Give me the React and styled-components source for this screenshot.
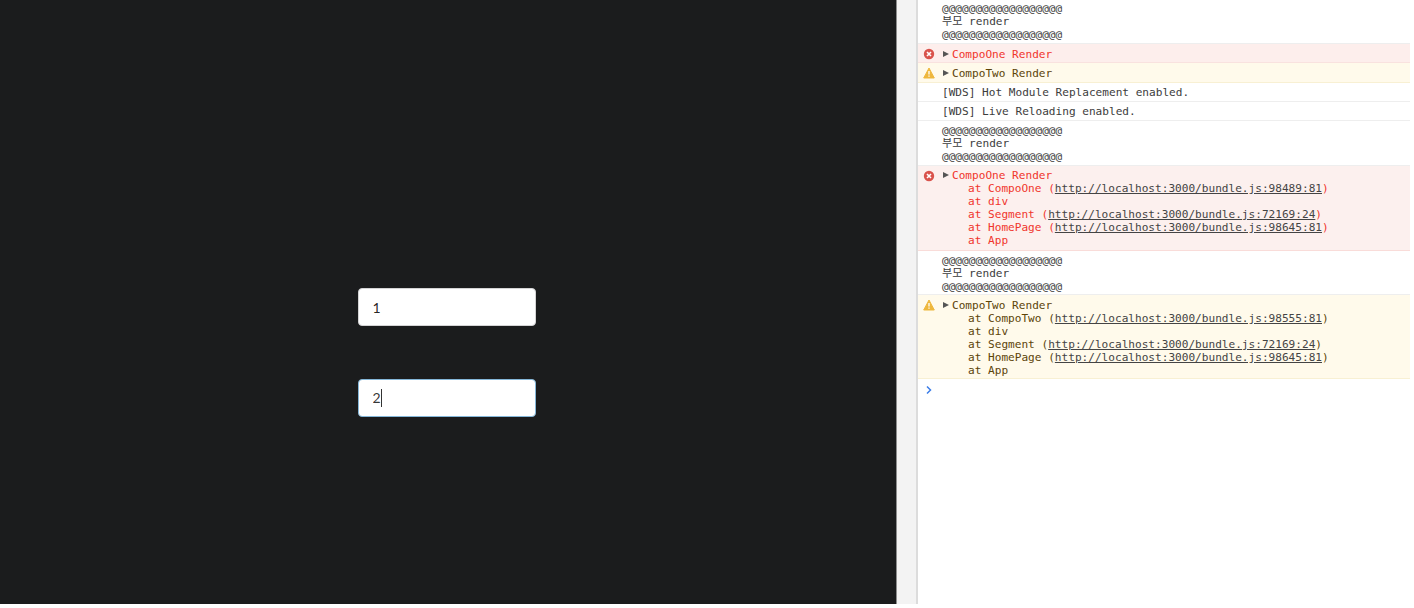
import styled, { createGlobalStyle } from 'styled-components';

const GlobalStyle = createGlobalStyle`
  html,
  body {
    margin: 0;
    height: 100%;
    overflow: hidden;
    background: #fff;
  }
`;

const tones = {
  error: { bg: '#fcf0ee', border: '#f9dcd9', text: '#f0352c' },
  errorFlat: { bg: '#fdeeec', border: '#f9e2df', text: '#f0352c' },
  warn: { bg: '#fffaeb', border: '#f8f0d3', text: '#5c4409' },
  log: { bg: '#fff', border: '#eeeeee', text: '#3c3c3c' },
};

const Page = styled.div`
  display: flex;
  width: 1410px;
  height: 604px;
`;

const Stage = styled.main`
  width: 896px;
  flex: none;
  background: #1b1c1d;
  padding: 288px 0 0 357.5px;
  box-sizing: border-box;
  display: flex;
  flex-direction: column;
  gap: 52.5px;
`;

const FieldWrap = styled.div`
  position: relative;
  width: 178px;
  height: 38px;
`;

const Field = styled.input`
  display: block;
  width: 100%;
  height: 100%;
  box-sizing: border-box;
  border: 1px solid ${(p) => (p.$focused ? '#85b7d9' : '#d4d4d5')};
  border-radius: 4px;
  background: #fff;
  padding: 0 14px;
  font: 14px Lato, 'Liberation Sans', sans-serif;
  color: ${(p) => (p.$focused ? 'rgba(0, 0, 0, 0.8)' : 'rgba(0, 0, 0, 0.87)')};
  outline: none;
`;

const Caret = styled.span`
  position: absolute;
  left: 23.5px;
  top: 10px;
  width: 1px;
  height: 18px;
  background: #333;
`;

const Gutter = styled.div`
  width: 22px;
  flex: none;
  background: #f3f3f3;
  border-left: 1px solid #8e8e8e;
  border-right: 2px solid #dcdcdc;
  box-sizing: border-box;
`;

const Console = styled.section`
  flex: 1;
  min-width: 0;
  font: 11.1px/13px 'DejaVu Sans Mono', 'Noto Sans CJK KR', monospace;
  background: #fff;
`;

const Row = styled.div`
  position: relative;
  box-sizing: border-box;
  height: ${(p) => p.$height}px;
  padding: ${(p) => p.$top}px 0 0 24px;
  white-space: pre;
  background: ${(p) => tones[p.$tone].bg};
  color: ${(p) => tones[p.$tone].text};
  border-bottom: 1px solid ${(p) => tones[p.$tone].border};
`;

const StatusIcon = styled.svg`
  position: absolute;
  left: 5px;
  top: 4px;
  width: 12px;
  height: 12px;
`;

const Arrow = styled.span`
  display: inline-block;
  width: 0;
  height: 0;
  margin: 0 3px 1px 1px;
  border-left: 6px solid #555;
  border-top: 3.5px solid transparent;
  border-bottom: 3.5px solid transparent;
`;

const Trace = styled.div`
  padding-left: 26px;
`;

const Source = styled.span`
  color: #444;
  text-decoration: underline;
`;

const Prompt = styled.svg`
  display: block;
  margin: 6px 0 0 7px;
  width: 8px;
  height: 10px;
`;

const ErrorIcon = () => (
  <StatusIcon viewBox="0 0 12 12">
    <circle cx="6" cy="6" r="5.2" fill="#d9534c" />
    <path d="M4 4l4 4M8 4l-4 4" stroke="#fff" strokeWidth="1.6" />
  </StatusIcon>
);

const WarnIcon = () => (
  <StatusIcon viewBox="0 0 12 12">
    <path d="M6 1l5.3 10H.7z" fill="#eeb73c" stroke="#eeb73c" strokeLinejoin="round" />
    <path d="M6 4v3.6M6 8.6v1.2" stroke="#fff" strokeWidth="1.3" />
  </StatusIcon>
);

const ParentLog = ({ height = 45, top = 3 }) => (
  <Row $tone="log" $height={height} $top={top}>
    {'@@@@@@@@@@@@@@@@@@\n부모 render\n@@@@@@@@@@@@@@@@@@'}
  </Row>
);

const StackLine = ({ name, url }) => (
  <div>
    at {name}
    {url && (
      <>
        {' ('}
        <Source>{url}</Source>
        {')'}
      </>
    )}
  </div>
);

const stack = (first, firstUrl) => [
  [first, firstUrl],
  ['div'],
  ['Segment', 'http://localhost:3000/bundle.js:72169:24'],
  ['HomePage', 'http://localhost:3000/bundle.js:98645:81'],
  ['App'],
];

const Expanded = ({ tone, label, lines, height, top, icon }) => (
  <Row $tone={tone} $height={height} $top={top}>
    {icon}
    <Arrow />
    {label}
    <Trace>
      {lines.map(([name, url]) => (
        <StackLine key={name} name={name} url={url} />
      ))}
    </Trace>
  </Row>
);

export default function App() {
  return (
    <Page>
      <GlobalStyle />
      <Stage>
        <FieldWrap>
          <Field defaultValue="1" />
        </FieldWrap>
        <FieldWrap>
          <Field defaultValue="2" $focused />
          <Caret />
        </FieldWrap>
      </Stage>
      <Gutter />
      <Console>
        <ParentLog height={44} top={2} />
        <Row $tone="errorFlat" $height={19} $top={4}>
          <ErrorIcon />
          <Arrow />
          CompoOne Render
        </Row>
        <Row $tone="warn" $height={20} $top={4}>
          <WarnIcon />
          <Arrow />
          CompoTwo Render
        </Row>
        <Row $tone="log" $height={19} $top={3}>
          [WDS] Hot Module Replacement enabled.
        </Row>
        <Row $tone="log" $height={19} $top={3}>
          [WDS] Live Reloading enabled.
        </Row>
        <ParentLog />
        <Expanded
          tone="error"
          label="CompoOne Render"
          height={85}
          top={3}
          icon={<ErrorIcon />}
          lines={stack('CompoOne', 'http://localhost:3000/bundle.js:98489:81')}
        />
        <ParentLog height={44} />
        <Expanded
          tone="warn"
          label="CompoTwo Render"
          height={84}
          top={4}
          icon={<WarnIcon />}
          lines={stack('CompoTwo', 'http://localhost:3000/bundle.js:98555:81')}
        />
        <Prompt viewBox="0 0 8 10">
          <path d="M2 1.5l3.5 3.5L2 8.5" fill="none" stroke="#3b7de8" strokeWidth="1.5" />
        </Prompt>
      </Console>
    </Page>
  );
}
